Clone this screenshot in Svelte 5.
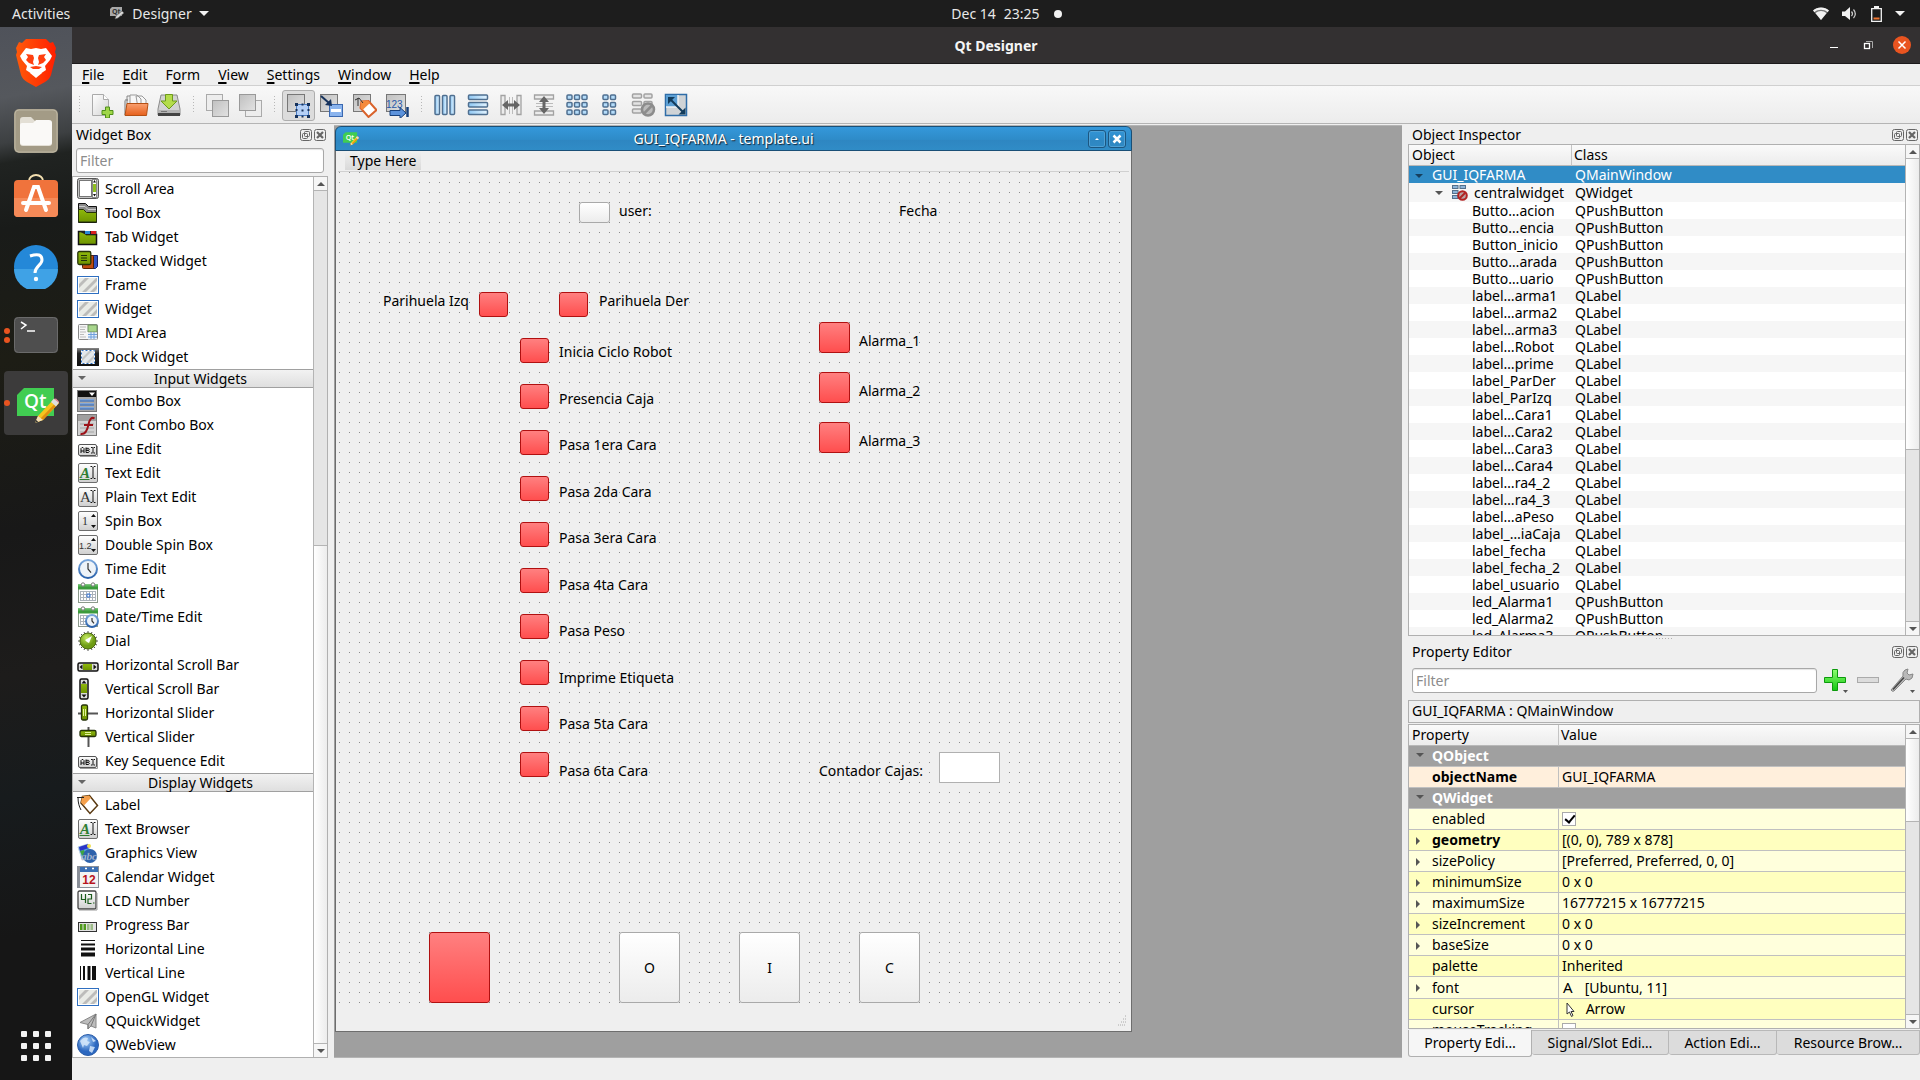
<script>
  const frame = (extra) => `<rect x="1.5" y="1.5" width="19" height="19" rx="1.5" fill="url(#g-light)" stroke="#6d6d6d"/>${extra}`;
  const stripes = `<rect x=".5" y="2.5" width="21" height="17" fill="#fff" stroke="#2f6fc0"/><rect x="2" y="4" width="18" height="14" fill="#e9ebe6"/><path d="M2 10l6-6h4L2 14zM5 18L19 4h1v3L9 18zM13 18l7-7v4l-3 3z" fill="#bcbcba"/>`;
  const abi = `<rect x="1.5" y="6.5" width="18" height="11" rx="1.5" fill="url(#g-light)" stroke="#555"/><path d="M3 18.500h17.500V8" stroke="#999" fill="none"/><path d="M4 15v-4.500L5 9.500h1l1 1V15M4 13h3M9 9.500v5h2.500l.8-1-.8-1.200H9h2.500l.8-1-.8-1H9M14 9.500h1.500l.5.5v4.500l-.5.500H14M18 9.500h-1.500M18 15h-1.500" fill="none" stroke="#111"/>`;
  const clockFace = (cx, cy, r) => `<circle cx="${cx}" cy="${cy}" r="${r}" fill="#eef3f8" stroke="url(#g-clock)" stroke-width="2"/><path d="M${cx} ${cy - r + 3}V${cy}l${r / 3} ${r / 2.500}" fill="none" stroke="#333" stroke-width="1.200"/>`;
  const calendar = `<rect x="1.500" y="3.500" width="19" height="17" fill="#fff" stroke="#8d9a8d"/><path d="M1 2.500h20v5H1z" fill="#3c9a3c"/><path d="M1 2.500h20v2H1z" fill="#5cb85c"/><circle cx="6" cy="2.500" r="1.700" fill="#fff" stroke="#777"/><circle cx="16" cy="2.500" r="1.700" fill="#fff" stroke="#777"/><path d="M3.500 9.500h15M3.500 12.500h15M3.500 15.500h15M3.500 18.500h15M3.500 9v10M6.500 9v10M9.500 9v10M12.500 9v10M15.500 9v10M18.500 9v10" stroke="#aab2ba"/>`;
  const textIcon = (color, line) => frame(`<text x="3" y="16" font-family="Liberation Serif" font-size="15" font-style="${line ? 'italic' : 'normal'}" font-weight="${line ? 'bold' : 'normal'}" fill="${color}">A</text>${line ? '<path d="M2.500 17.500h10" stroke="#2e7d32"/>' : ''}<path d="M13.500 4.500h1.500l1 1 1-1h1.500M16 5.500v10M13.500 16.500h1.500l1-1 1 1h1.500" fill="none" stroke="#111"/>`);

  const icons = {
    scrollArea: `<rect x=".5" y=".5" width="21" height="20" rx="2" fill="#c4c4c4" stroke="#555"/><rect x="2.500" y="2.500" width="12" height="16" fill="#fff" stroke="#777"/><rect x="15.500" y="1.500" width="4" height="18" fill="#fff" stroke="#888"/><path d="M16 6h3v8h-3z" fill="#8fbf1f"/><path d="M16 4.500h3L17.500 2zM16 16h3l-1.500 2.500z" fill="#111"/>`,
    toolBox: `<path d="M1.500 1.500h7l3 3h8v16h-18z" fill="#8a8a8a" stroke="#111"/><path d="M2 4.500h6l3 3h8" stroke="#ccc" fill="none"/><path d="M1.500 7.500h5l3 3h10v9.500h-18z" fill="url(#g-green)" stroke="#26330a"/>`,
    tabWidget: `<path d="M1.500 5.500h6l2 3h10v10h-18z" fill="url(#g-green)" stroke="#111" stroke-width="1.500"/><path d="M1.500 5h18v4h-10z" fill="#222"/><path d="M8 5h5v3H8z" fill="#2c8cd8"/><path d="M14 5h5v3h-5z" fill="#d82020"/>`,
    stacked: `<path d="M9.500 5.500h11v11l-2 2h-9z" fill="#3355c4" stroke="#15246b"/><rect x="5.500" y="5.500" width="11" height="13" rx="1" fill="#c04c10" stroke="#5a2000"/><rect x=".8" y="1.500" width="13" height="13" rx="1.500" fill="url(#g-green)" stroke="#26330a" stroke-width="1.300"/><path d="M4 5.500h6M4 8h6M4 10.500h6" stroke="#20300a"/>`,
    stripes,
    mdi: `<rect x="1.500" y="2.500" width="19" height="15" rx="1" fill="#f6f6f6" stroke="#888"/><path d="M3 5h6M3 7.500h5M3 10h6M3 12.500h4M3 15h6" stroke="#bbb"/><path d="M11 3h9v7h-9z" fill="#a8d68c" stroke="#6d8e5c"/><path d="M11 10.500h9v7h-9z" fill="#e6f0fb"/><path d="M11 12.500h9M11 15h9M14 10v7M17 10v7" stroke="#6f9fdc"/>`,
    dock: `<path d="M0 2h22v18H0z" fill="url(#g-dark)"/><path d="M4 4h14v14H4z" fill="#e3e7ea"/><path d="M5 12l7-7h3L5 15zM9 17l8-8v3l-5 5z" fill="#c4c6c4"/><path d="M4.500 4.500h13v13h-13z" fill="none" stroke="#fff"/><path d="M4.500 4.500h13v13h-13z" fill="none" stroke="#2c6fc0" stroke-dasharray="2 2"/>`,
    combo: `<rect x=".5" y=".5" width="19" height="21" fill="#a8a8a8" stroke="#777"/><path d="M1 1h18v6H1z" fill="#111"/><path d="M12 2.500h6L15 6z" fill="#fff"/><path d="M3 9h14v2.500H3zM3 13h14v2.500H3zM3 17h14v2.500H3z" fill="#7ea6dc"/><path d="M3 11h14M3 15h14M3 19h14" stroke="#3b67a8"/>`,
    fontCombo: `<rect x=".5" y=".5" width="19" height="21" fill="#d2d2d2" stroke="#777"/><path d="M1 1h18v6H1z" fill="#a0a0a0"/><path d="M3 10h14M3 14h14M3 18h14" stroke="#bbb" stroke-width="2"/><path d="M17.500 4.500c-3-2-5 1-6 6s-2.500 10.500-8 9.500M7 11h9" fill="none" stroke="#9c1218" stroke-width="2"/>`,
    abi,
    textEdit: textIcon('#2e7d32', true),
    plainText: textIcon('#333', false),
    spin: frame(`<text x="5" y="15" font-family="Liberation Serif" font-size="12" fill="#333">1</text><path d="M14 7h5l-2.500-3zM14 15h5l-2.500 3z" fill="#111"/>`),
    dspin: frame(`<text x="2" y="15" font-family="Liberation Sans" font-size="9" fill="#333">1.2</text><path d="M14 7h5l-2.500-3zM14 15h5l-2.500 3z" fill="#111"/>`),
    clock: clockFace(11, 11, 9),
    calendar: calendar + `<path d="M10 12h3v3h-3z" fill="none" stroke="#3a78d8"/>`,
    dateTime: calendar + clockFace(15, 15, 6),
    dial: `<path d="M11 1v20M1 11h20M4 4l14 14M18 4L4 18M7 2l8 18M15 2L7 20M2 7l18 8M2 15l18-8" stroke="#555"/><circle cx="11" cy="11" r="8" fill="url(#g-dial)" stroke="#4c6a10"/><path d="M8 10l7-4-3 7-2-1z" fill="#fff"/>`,
    hscroll: `<rect x="1" y="9" width="20" height="8" rx="1.500" fill="#ddd" stroke="#111" stroke-width="1.500"/><path d="M6 10h9v6H6z" fill="url(#g-green)"/><path d="M5.500 10.500v5L2.500 13zM16.500 10.500v5l3-2.500z" fill="#111"/>`,
    vscroll: `<rect x="3" y="1" width="8" height="20" rx="1.500" fill="#ddd" stroke="#111" stroke-width="1.500"/><path d="M4 6h6v9H4z" fill="url(#g-green)"/><path d="M4.500 5.500h5L7 2.500zM4.500 16.500h5l-2.500 3z" fill="#111"/>`,
    hslider: `<path d="M1 11.500h20" stroke="#555" stroke-width="2"/><rect x="4.500" y="3" width="6" height="15" rx="1.500" fill="url(#g-green)" stroke="#26330a" stroke-width="1.300"/><path d="M6.500 7v7M8.500 7v7" stroke="#e4f59a"/>`,
    vslider: `<path d="M11.500 1v20" stroke="#555" stroke-width="2"/><rect x="3" y="4.500" width="16" height="6" rx="1.500" fill="url(#g-green)" stroke="#26330a" stroke-width="1.300"/><path d="M8 6.500h6M8 8.500h6" stroke="#e4f59a"/>`,
    label: `<path d="M5.500 2.500l7-1 8 10-7.500 8L4 9z" fill="#fff" stroke="#5a3a12" stroke-width="1.500"/><path d="M5 2.500l7-1 2 2.500-7 7.500-3-3z" fill="#f5a04c"/><path d="M0 3.500h7M1 3c0 6 1 9 3 13" fill="none" stroke="#222"/>`,
    graphics: `<path d="M1 5l10-3 3 12-9 3z" fill="#5aa3e8" stroke="#b9cfe0"/><path d="M2 5l9-3 1 4-9 3z" fill="#2a35c8"/><path d="M3 9l4-1 2 5-3 3z" fill="#3fa540"/><circle cx="12" cy="4" r="2" fill="#f0e050"/><circle cx="13" cy="14" r="7" fill="#2d62ac"/><text x="4" y="18" font-family="Liberation Serif" font-size="11" font-style="italic" fill="#e6eefa" stroke="#6c86ac" stroke-width=".3">abc</text>`,
    calWidget: `<path d="M0 0h22v22H0z" fill="#8a8f98"/><path d="M3 1h18v20H3z" fill="#f3f3f3"/><path d="M3 1h18v5H3z" fill="#3b6fb4"/><path d="M8 2.500h2M15 2.500h2" stroke="#fff" stroke-width="1.500"/><text x="12" y="18" text-anchor="middle" font-family="Liberation Sans" font-size="12" font-weight="bold" fill="#b8141c">12</text>`,
    lcd: `<rect x="1" y="1" width="18" height="18" rx="1.500" fill="url(#g-light)" stroke="#444" stroke-width="1.300"/><path d="M2 20h18V3" stroke="#999" fill="none"/><path d="M4.500 4v5.500h4M8.500 4v9M11 4.500h3.500v4.500H11v4.500h3.500M16 13h1.500" fill="none" stroke="#1d5c1d" stroke-width="1.200"/>`,
    progress: `<rect x="1.500" y="8.500" width="18" height="9" fill="#e2e2e2" stroke="#333"/><path d="M3 10h2.500v6H3zM6.500 10H9v6H6.500z" fill="#4f9a1c"/><path d="M10 10h2.500v6H10zM13.500 10H16v6h-2.500z" fill="#9dbb88"/>`,
    hline: `<path d="M4 2.500h14" stroke="#111"/><path d="M4 6.500h14" stroke="#111" stroke-width="2"/><path d="M4 11h14" stroke="#111" stroke-width="3"/><path d="M4 16.500h14" stroke="#111" stroke-width="4"/>`,
    vline: `<path d="M3.500 4v14" stroke="#111"/><path d="M7 4v14" stroke="#111" stroke-width="2"/><path d="M12 4v14" stroke="#111" stroke-width="3"/><path d="M17 4v14" stroke="#111" stroke-width="4"/>`,
    quick: `<path d="M3 12.500L19 4v14l-5-2-3 3v-4.500z" fill="#bdbdbd" stroke="#888"/><path d="M19 4l-8 10.500V19M19 4l-5 12" fill="none" stroke="#777"/>`,
    web: `<circle cx="11" cy="11" r="10.500" fill="url(#g-globe)" stroke="#2a5ca8"/><path d="M3 7c3-4 6-4 8-3l-1 3 3 1-3 4-3-1-1 3zM13 12l5 1-3 6-3-2zM14 3l5 4-3 1z" fill="#d6e8fa" opacity=".85"/>`,
    newFile: `<path d="M1.500 1.500h11l5 5v16h-16z" fill="url(#g-page)" stroke="#aaa"/><path d="M12.500 1.500v5h5" fill="#fff" stroke="#aaa"/><path d="M14.500 14h4v3.500H22v4h-3.500V25h-4v-3.500H11v-4h3.500z" fill="#9fd648" stroke="#4f8f1a"/>`,
    open: `<path d="M3 3h8l1 3h9v16H3z" fill="#efefef" stroke="#888"/><path d="M6 2h7l4 4v10H6zM12 3h6l4 4v8h-8z" fill="#f7f7f7" stroke="#999"/><path d="M1 7.500V22M1 7h3" stroke="#777" fill="none"/><path d="M3 10.500h21l-1.500 12H1z" fill="url(#g-orange)" stroke="#b55014"/>`,
    save: `<path d="M4 2h16l3 14v6H1v-6z" fill="#d2d2d2" stroke="#8a8a8a"/><path d="M1.500 17h21v3h-21z" fill="#b4b4b4"/><path d="M1 20h22v3H1z" fill="#444"/><path d="M4 18.500h6" stroke="#777"/><path d="M8.500 1.500h7V8H20l-8 8-8-8h4.500z" fill="#b4dc4a" stroke="#6d9a1c"/>`,
    raise: `<rect x="1.500" y="1.500" width="16" height="16" fill="#ededed" stroke="#aaa"/><rect x="7.500" y="7.500" width="16" height="16" fill="url(#g-gray)" stroke="#999"/>`,
    lower: `<rect x="7.500" y="7.500" width="16" height="16" fill="#ededed" stroke="#aaa"/><rect x="1.500" y="1.500" width="16" height="16" fill="url(#g-gray)" stroke="#999"/>`,
    editWidgets: `<rect x="1.500" y="1.500" width="17" height="17" fill="url(#g-gray)" stroke="#777"/><rect x="10.500" y="11.500" width="12" height="11" fill="#b5d0f7" stroke="#4a7cc4"/><path d="M9 10h3v3H9zM21 10h3v3h-3zM9 22h3v3H9zM21 22h3v3h-3z" fill="#16325c"/><path d="M15.500 10.500h2v2h-2zM9.500 16h2v2h-2zM21.500 16h2v2h-2zM15.500 22.500h2v2h-2zM15.500 16.500h2v2h-2z" fill="#16325c"/>`,
    editSignals: `<rect x="1.500" y="1.500" width="17" height="17" fill="url(#g-gray)" stroke="#777"/><rect x="10.500" y="11.500" width="13" height="12" fill="#8ab4ee" stroke="#3a68b0"/><path d="M12 16h10v3H12z" fill="#fff"/><path d="M2 3l8 7" stroke="#16325c" stroke-width="2"/><path d="M13 13l-7-1 6-6z" fill="#16325c"/>`,
    editBuddies: `<rect x="1.500" y="1.500" width="17" height="17" fill="url(#g-gray)" stroke="#777"/><path d="M9.500 8.500l7-.500 8 9-8 7-8-9z" fill="#fff" stroke="#d9622b" stroke-width="2"/><path d="M9 8l7-.500 2 2.500-7.500 7-2-2z" fill="#f58a3c"/><path d="M3 7l4-2 4 5M6 5v8" fill="none" stroke="#333"/>`,
    editTab: `<rect x="1.500" y="1.500" width="19" height="17" fill="url(#g-gray)" stroke="#777"/><text x="1" y="15" font-family="Liberation Sans" font-size="10" fill="#2a58a8">123</text><path d="M5 17.500h10v-3l6 5.500-6 5.500v-3H5z" fill="#5b92dc" stroke="#17407c"/><path d="M22.500 14v10" stroke="#17407c" stroke-width="2.500"/>`,
    layoutH: `<g fill="url(#g-blue)" stroke="#4f6f90" stroke-width="1.500"><rect x="2" y="2.500" width="4.500" height="19" rx="1"/><rect x="9.500" y="2.500" width="4.500" height="19" rx="1"/><rect x="17" y="2.500" width="4.500" height="19" rx="1"/></g>`,
    layoutV: `<g fill="url(#g-blue)" stroke="#4f6f90" stroke-width="1.500"><rect x="2.500" y="2" width="19" height="4.500" rx="1"/><rect x="2.500" y="9.500" width="19" height="4.500" rx="1"/><rect x="2.500" y="17" width="19" height="4.500" rx="1"/></g>`,
    splitH: `<g fill="#ececec" stroke="#a2a2a2" stroke-width="1.300"><path d="M2 2.500h4v19H2zM18 2.500h4v19h-4z"/></g><path d="M10.500 4v17M13.500 4v17" stroke="#bbb"/><path d="M3 12l6-5v3.500h6V7l6 5-6 5v-3.500H9V17z" fill="#666"/>`,
    splitV: `<g fill="#ececec" stroke="#a2a2a2" stroke-width="1.300"><path d="M2.500 2h19v4h-19zM2.500 18h19v4h-19z"/></g><path d="M4 10.500h17M4 13.500h17" stroke="#bbb"/><path d="M12 3l5 6h-3.500v6H17l-5 6-5-6h3.500V9H7z" fill="#666"/>`,
    grid: `<g fill="#b4dcfa" stroke="#4f6f90" stroke-width="1.500">${[2, 9.5, 17].map((y) => [2, 9.5, 17].map((x) => `<rect x="${x}" y="${y}" width="5" height="4.500" rx="1"/>`).join('')).join('')}</g>`,
    form: `<g fill="#b4dcfa" stroke="#4f6f90" stroke-width="1.500">${[2, 9.5, 17].map((y) => [5, 12.5].map((x) => `<rect x="${x}" y="${y}" width="5" height="4.500" rx="1"/>`).join('')).join('')}</g>`,
    breakLayout: `<g fill="#e3e3e3" stroke="#a2a2a2" stroke-width="1.500"><rect x="1.500" y="1" width="9" height="4" rx="1"/><rect x="13" y="1" width="8" height="4" rx="1"/><rect x="1.500" y="8.500" width="9" height="4" rx="1"/><rect x="13" y="8.500" width="8" height="4" rx="1"/><rect x="1.500" y="16" width="9" height="4" rx="1"/></g><circle cx="17" cy="16.500" r="6" fill="#bbb" stroke="#8c8c8c" stroke-width="2.500"/><path d="M13 20.500l8-8" stroke="#8c8c8c" stroke-width="2.500"/>`,
    adjust: `<rect x="1.500" y="1.500" width="21" height="21" fill="#cfd3d6" stroke="#2f6da8" stroke-width="1.500"/><path d="M2 2h12v12H2z" fill="#5b9fd4"/><path d="M14 2v12H2" fill="none" stroke="#eef2f5" stroke-width="1.500"/><path d="M6 6l13 13" stroke="#123c5c" stroke-width="2"/><path d="M4 4h7l-7 7zM21.500 21.500h-7l7-7z" fill="#123c5c"/>`
  };

  const containers = [
    ['scrollArea', 'Scroll Area'], ['toolBox', 'Tool Box'], ['tabWidget', 'Tab Widget'], ['stacked', 'Stacked Widget'],
    ['stripes', 'Frame'], ['stripes', 'Widget'], ['mdi', 'MDI Area'], ['dock', 'Dock Widget']
  ];
  const inputs = [
    ['combo', 'Combo Box'], ['fontCombo', 'Font Combo Box'], ['abi', 'Line Edit'], ['textEdit', 'Text Edit'],
    ['plainText', 'Plain Text Edit'], ['spin', 'Spin Box'], ['dspin', 'Double Spin Box'], ['clock', 'Time Edit'],
    ['calendar', 'Date Edit'], ['dateTime', 'Date/Time Edit'], ['dial', 'Dial'], ['hscroll', 'Horizontal Scroll Bar'],
    ['vscroll', 'Vertical Scroll Bar'], ['hslider', 'Horizontal Slider'], ['vslider', 'Vertical Slider'], ['abi', 'Key Sequence Edit']
  ];
  const displays = [
    ['label', 'Label'], ['textEdit', 'Text Browser'], ['graphics', 'Graphics View'], ['calWidget', 'Calendar Widget'],
    ['lcd', 'LCD Number'], ['progress', 'Progress Bar'], ['hline', 'Horizontal Line'], ['vline', 'Vertical Line'],
    ['stripes', 'OpenGL Widget'], ['quick', 'QQuickWidget'], ['web', 'QWebView']
  ];

  const menus = [['', 'F', 'ile'], ['', 'E', 'dit'], ['F', 'o', 'rm'], ['', 'V', 'iew'], ['', 'S', 'ettings'], ['', 'W', 'indow'], ['', 'H', 'elp']];
  const toolGroups = [
    [['newFile', 'New'], ['open', 'Open'], ['save', 'Save']],
    [['raise', 'Bring to Front'], ['lower', 'Send to Back']],
    [['editWidgets', 'Edit Widgets'], ['editSignals', 'Edit Signals/Slots'], ['editBuddies', 'Edit Buddies'], ['editTab', 'Edit Tab Order']],
    [['layoutH', 'Lay Out Horizontally'], ['layoutV', 'Lay Out Vertically'], ['splitH', 'Horizontal Splitter'], ['splitV', 'Vertical Splitter'],
      ['grid', 'Lay Out in a Grid'], ['form', 'Lay Out in a Form'], ['breakLayout', 'Break Layout'], ['adjust', 'Adjust Size']]
  ];

  // Form widgets, in coordinates of the edited main window's central widget.
  const steps = ['Inicia Ciclo Robot', 'Presencia Caja', 'Pasa 1era Cara', 'Pasa 2da Cara', 'Pasa 3era Cara', 'Pasa 4ta Cara', 'Pasa Peso', 'Imprime Etiqueta', 'Pasa 5ta Cara', 'Pasa 6ta Cara'];
  const leds = [
    { x: 140, y: 120, w: 29, h: 25, name: 'led_ParIzq' },
    { x: 220, y: 120, w: 29, h: 25, name: 'led_ParDer' },
    ...steps.map((s, i) => ({ x: 181, y: 166 + i * 46, w: 29, h: 25, name: 'led ' + s })),
    ...[1, 2, 3].map((n, i) => ({ x: 480, y: 150 + i * 50, w: 31, h: 31, name: 'led_Alarma' + n })),
    { x: 90, y: 760, w: 61, h: 71, name: 'Button_parada' }
  ];
  const labels = [
    { x: 280, y: 29, text: 'user:' },
    { x: 560, y: 29, text: 'Fecha' },
    { x: 44, y: 119, text: 'Parihuela Izq' },
    { x: 260, y: 119, text: 'Parihuela Der' },
    ...steps.map((text, i) => ({ x: 220, y: 170 + Math.round(i * 46.5), text })),
    ...[1, 2, 3].map((n, i) => ({ x: 520, y: 159 + i * 50, text: 'Alarma_' + n }))
  ];
  const pushButtons = [
    { x: 240, y: 30, w: 31, h: 21, text: '', name: 'Button_usuario' },
    { x: 280, y: 760, w: 61, h: 71, text: 'O' },
    { x: 400, y: 760, w: 61, h: 71, text: 'I' },
    { x: 520, y: 760, w: 61, h: 71, text: 'C' }
  ];

  const objects = [
    ['Butto…acion', 'QPushButton'], ['Butto…encia', 'QPushButton'], ['Button_inicio', 'QPushButton'], ['Butto…arada', 'QPushButton'], ['Butto…uario', 'QPushButton'],
    ...['label…arma1', 'label…arma2', 'label…arma3', 'label…Robot', 'label…prime', 'label_ParDer', 'label_ParIzq', 'label…Cara1', 'label…Cara2', 'label…Cara3', 'label…Cara4',
      'label…ra4_2', 'label…ra4_3', 'label…aPeso', 'label_…iaCaja', 'label_fecha', 'label_fecha_2', 'label_usuario'].map((n) => [n, 'QLabel']),
    ['led_Alarma1', 'QPushButton'], ['led_Alarma2', 'QPushButton'], ['led_Alarma3', 'QPushButton']
  ];

  const props = [
    { group: 'QObject' },
    { name: 'objectName', value: 'GUI_IQFARMA', bold: true, tone: 'peach' },
    { group: 'QWidget' },
    { name: 'enabled', check: true, checked: true },
    { name: 'geometry', value: '[(0, 0), 789 x 878]', bold: true, tone: 'deep', arrow: true },
    { name: 'sizePolicy', value: '[Preferred, Preferred, 0, 0]', arrow: true },
    { name: 'minimumSize', value: '0 x 0', tone: 'deep', arrow: true },
    { name: 'maximumSize', value: '16777215 x 16777215', arrow: true },
    { name: 'sizeIncrement', value: '0 x 0', tone: 'deep', arrow: true },
    { name: 'baseSize', value: '0 x 0', arrow: true },
    { name: 'palette', value: 'Inherited', tone: 'deep' },
    { name: 'font', value: '[Ubuntu, 11]', arrow: true, glyph: 'font' },
    { name: 'cursor', value: 'Arrow', tone: 'deep', glyph: 'cursor' },
    { name: 'mouseTracking', check: true, checked: false }
  ];
  const tabs = ['Property Edi…', 'Signal/Slot Edi…', 'Action Edi…', 'Resource Brow…'];
</script>

{#snippet qtLogo()}
  <svg class="qt" viewBox="0 0 42 36" aria-hidden="true">
    <path d="M7 0h30v28H0V7z" fill="#41cd52" />
    <text x="7" y="20" font-family="Open Sans" font-weight="600" font-size="19" fill="#fff">Qt</text>
    <path d="M18 35l3-7L37 11l5 4-16 17z" fill="#f7c51e" />
    <path d="M23.500 30.500L40 13.500l2 1.500-16 17z" fill="#e08f10" />
    <path d="M34 14l3-3.500 5 4-3 4z" fill="#dedede" />
    <path d="M37 11l2-.500 3 3v1.500z" fill="#e58f96" />
    <path d="M18 35l3-7 5 4z" fill="#f3dfb8" />
    <path d="M18 35l1.200-3 2 1.800z" fill="#333" />
  </svg>
{/snippet}

{#snippet dockTitle(text)}
  <div class="dock-title">
    <h2>{text}</h2>
    <button class="mini" aria-label="Float {text}">
      <svg viewBox="0 0 12 12"><rect x=".5" y=".5" width="11" height="11" rx="2" /><rect x="4.500" y="2.500" width="5" height="5" rx="1" /><rect x="2.500" y="4.500" width="5" height="5" rx="1" /></svg>
    </button>
    <button class="mini" aria-label="Close {text}">
      <svg viewBox="0 0 12 12"><rect x=".5" y=".5" width="11" height="11" rx="2" /><path d="M3 3l6 6M9 3l-6 6" stroke-width="2.200" /></svg>
    </button>
  </div>
{/snippet}

{#snippet scrollbar(kind)}
  <div class="scrollbar {kind}">
    <button aria-label="Scroll up"><svg viewBox="0 0 8 4"><path d="M0 4l4-4 4 4z" /></svg></button>
    <div class="track"><div class="thumb"></div></div>
    <button aria-label="Scroll down"><svg viewBox="0 0 8 4"><path d="M0 0l4 4 4-4z" /></svg></button>
  </div>
{/snippet}

{#snippet widgetList(items)}
  <ul>
    {#each items as [icon, text]}
      <li><svg viewBox="0 0 22 22" aria-hidden="true">{@html icons[icon]}</svg>{text}</li>
    {/each}
  </ul>
{/snippet}

<svg class="defs" aria-hidden="true">
  <defs>
    <linearGradient id="g-light" x2="0" y2="1"><stop stop-color="#fff" /><stop offset="1" stop-color="#cfcfcf" /></linearGradient>
    <linearGradient id="g-page" x2="1" y2="1"><stop stop-color="#fff" /><stop offset="1" stop-color="#d4d4d4" /></linearGradient>
    <linearGradient id="g-gray" x2="1" y2="1"><stop stop-color="#c0c0c0" /><stop offset="1" stop-color="#e2e2e2" /></linearGradient>
    <linearGradient id="g-dark" x2="0" y2="1"><stop stop-color="#888" /><stop offset=".3" stop-color="#222" /><stop offset="1" stop-color="#111" /></linearGradient>
    <linearGradient id="g-green" x2="0" y2="1"><stop stop-color="#8fb80c" /><stop offset="1" stop-color="#6e9400" /></linearGradient>
    <linearGradient id="g-orange" x2="0" y2="1"><stop stop-color="#f9a070" /><stop offset="1" stop-color="#e6601c" /></linearGradient>
    <linearGradient id="g-blue" x2="1" y2="0"><stop stop-color="#8fc8f4" /><stop offset="1" stop-color="#e4f4ff" /></linearGradient>
    <linearGradient id="g-clock" x2="0" y2="1"><stop stop-color="#7aa7dc" /><stop offset="1" stop-color="#2b62ab" /></linearGradient>
    <linearGradient id="g-brave" x2="1" y2="0"><stop stop-color="#ff5a0a" /><stop offset="1" stop-color="#ff1f00" /></linearGradient>
    <linearGradient id="g-plus" x2="0" y2="1"><stop stop-color="#8dff70" /><stop offset="1" stop-color="#12c512" /></linearGradient>
    <radialGradient id="g-dial" cx=".4" cy=".3"><stop stop-color="#c5ea62" /><stop offset="1" stop-color="#6e9c14" /></radialGradient>
    <radialGradient id="g-globe" cx=".4" cy=".3"><stop stop-color="#a9d2fa" /><stop offset="1" stop-color="#2c68c0" /></radialGradient>
  </defs>
</svg>

<div class="desktop">
  <header class="topbar">
    <div class="left">
      <button class="activities">Activities</button>
      <button class="appmenu">
        <svg width="15" height="13" viewBox="0 0 15 13" aria-hidden="true"><path d="M2 0h10v9H0V2z" fill="#a8a8a8" /><text x="2" y="7" font-family="Open Sans" font-size="7" font-weight="700" fill="#333">Qt</text><path d="M5 12l1-3 6-5 2 2-6 5z" fill="#d6d6d6" stroke="#555" stroke-width=".6" /></svg>
        Designer
        <svg width="10" height="5" viewBox="0 0 10 5" aria-hidden="true"><path d="M0 0h10L5 5z" fill="#f2f2f2" /></svg>
      </button>
    </div>
    <button class="clock"><span>Dec 14</span><span>23:25</span><i></i></button>
    <button class="tray" aria-label="System menu">
      <svg width="16" height="14" viewBox="0 0 16 14"><path d="M0 3.500C4-.5 12-.5 16 3.500L8 13z" fill="#777" /><path d="M0 3.500C4-.5 12-.5 16 3.500l-1.500 1.700C11 2 5 2 1.500 5.200z" fill="#f2f2f2" /><path d="M2.500 6.200c3-3 8-3 11 0L8 13z" fill="#f2f2f2" /></svg>
      <svg width="16" height="14" viewBox="0 0 16 14"><path d="M0 4.500h3L8 0v13L3 9H0z" fill="#f2f2f2" /><path d="M9.500 4.500q2 2.300 0 4.600M11.500 2.500q3.600 4.300 0 8.600" fill="none" stroke="#ccc" stroke-width="1.200" /></svg>
      <svg width="11" height="16" viewBox="0 0 11 16"><path d="M.7 2.700h9.600v12.600H.7z" fill="none" stroke="#f2f2f2" stroke-width="1.300" /><path d="M3 0h5v2H3z" fill="#f2f2f2" /><path d="M2.500 11.500h6v2h-6z" fill="#f0742f" /></svg>
      <svg width="10" height="5" viewBox="0 0 10 5"><path d="M0 0h10L5 5z" fill="#f2f2f2" /></svg>
    </button>
  </header>

  <nav class="launcher" aria-label="Dock">
    <button class="app brave" aria-label="Brave">
      <svg viewBox="0 0 40 48"><path d="M10 0h20l4 4 3-1 3 6-1 4 1 3-5 20c-1 3-3 5-6 7l-9 5-9-5c-3-2-5-4-6-7L0 16l1-3-1-4 3-6 3 1z" fill="url(#g-brave)" /><path d="M10 9l5 1 5-1 5 1 5-1 6 8-2 4-5 6 1 4-6 4-4-2-4 2-6-4 1-4-5-6-2-4z" fill="#fff" /><path d="M20 31l6 3-6 5-6-5z" fill="#fff" /><path d="M10 15l7 1 1 3-1 4 1 3-5-2-3-3 2-3zM30 15l-7 1-1 3 1 4-1 3 5-2 3-3-2-3zM14 28l6-1 6 1-3 2h-6z" fill="#ff4010" /></svg>
    </button>
    <button class="app files" aria-label="Files">
      <svg viewBox="0 0 44 44"><rect width="44" height="44" rx="5" fill="#a39b86" /><rect x="1" y="1" width="42" height="42" rx="4" fill="none" stroke="#bcb5a2" /><path d="M6 11q0-3 3-3h8l4 4h14q3 0 3 3v19q0 3-3 3H9q-3 0-3-3z" fill="#e3dfd5" /><path d="M6 16q0-2 2-2h11l3-3h13q3 0 3 3v19q0 3-3 3H9q-3 0-3-3z" fill="#faf9f7" /></svg>
    </button>
    <button class="app software" aria-label="Ubuntu Software">
      <svg viewBox="0 0 44 44"><path d="M15 8v-1a7 6 0 0 1 14 0v1" fill="none" stroke="#f3dfb0" stroke-width="2" /><rect y="6" width="44" height="37" rx="4" fill="#f0733c" /><path d="M0 24h44v15q0 4-4 4H4q-4 0-4-4z" fill="#f58a58" /><path d="M12 36l8-23h4l8 23M9 29h26" fill="none" stroke="#fff" stroke-width="4" stroke-linecap="round" /></svg>
    </button>
    <button class="app help" aria-label="Help">
      <svg viewBox="0 0 44 44"><circle cx="22" cy="22" r="22" fill="#2488d8" /><path d="M0 24a22 22 0 0 0 44 0z" fill="#3fa2e6" /><path d="M16 11q12-4 12 4c0 5-7 6-7 13" fill="none" stroke="#fff" stroke-width="3" /><circle cx="22" cy="34" r="2.200" fill="#fff" /></svg>
    </button>
    <button class="app terminal" aria-label="Terminal">
      <i class="run"></i><i class="run"></i>
      <svg viewBox="0 0 44 36"><rect width="44" height="36" rx="4" fill="#4e4e4e" /><rect x=".5" y=".5" width="43" height="35" rx="4" fill="none" stroke="#6b6b6b" /><path d="M7 5l5 3-5 4" fill="none" stroke="#fff" stroke-width="1.500" /><path d="M13 14h8" stroke="#fff" stroke-width="1.500" /></svg>
    </button>
    <button class="app designer" aria-label="Qt Designer">
      <i class="run"></i>
      {@render qtLogo()}
    </button>
    <button class="app grid-button" aria-label="Show Applications">
      <svg viewBox="0 0 30 30">
        {#each [0, 12, 24] as y}{#each [0, 12, 24] as x}<rect {x} {y} width="6" height="6" rx="1" fill="#f2f2f2" />{/each}{/each}
      </svg>
    </button>
  </nav>

  <main class="window">
    <header class="titlebar">
      <span></span>
      <h1>Qt Designer</h1>
      <div class="controls">
        <button aria-label="Minimize"><svg width="18" height="18" viewBox="0 0 18 18"><path d="M5 11.500h8" stroke="#fff" /></svg></button>
        <button aria-label="Restore"><svg width="18" height="18" viewBox="0 0 18 18"><path d="M7 5.500h6.500V12" fill="none" stroke="#aaa" /><rect x="5.500" y="7.500" width="5" height="5" fill="none" stroke="#fff" stroke-width="1.300" /></svg></button>
        <button aria-label="Close"><svg width="18" height="18" viewBox="0 0 18 18"><circle cx="9" cy="9" r="9" fill="#e95420" /><path d="M5.500 5.500l7 7M12.500 5.500l-7 7" stroke="#fff" stroke-width="1.500" /></svg></button>
      </div>
    </header>

    <nav class="menubar" aria-label="Main menu">
      {#each menus as [pre, key, post]}<button>{pre}<u>{key}</u>{post}</button>{/each}
    </nav>

    <div class="toolbar" role="toolbar" aria-label="Tools">
      {#each toolGroups as group}
        <span class="handle"></span>
        {#each group as [icon, title]}
          <button class:pressed={icon === 'editWidgets'} aria-label={title}><svg viewBox="0 0 25 25">{@html icons[icon]}</svg></button>
        {/each}
      {/each}
    </div>

    <div class="workspace">
      <section class="widgetbox">
        {@render dockTitle('Widget Box')}
        <div class="filter-row"><input type="text" placeholder="Filter" aria-label="Filter widgets" /></div>
        <div class="panel">
          <div class="scrolled">
            {@render widgetList(containers)}
            <h3><span></span>Input Widgets</h3>
            {@render widgetList(inputs)}
            <h3><span></span>Display Widgets</h3>
            {@render widgetList(displays)}
          </div>
          {@render scrollbar('at-end')}
        </div>
      </section>

      <section class="mdi" aria-label="Forms">
        <div class="formwin">
          <header>
            {@render qtLogo()}
            <h2>GUI_IQFARMA - template.ui</h2>
            <button aria-label="Shade form"><svg viewBox="0 0 18 18"><path d="M7 10h4L9 8z" fill="#fff" /></svg></button>
            <button aria-label="Close form"><svg viewBox="0 0 18 18"><path d="M5.500 5.500l7 7M12.500 5.500l-7 7" stroke="#fff" stroke-width="2.500" /></svg></button>
          </header>
          <div class="formmenu"><button>Type Here</button></div>
          <div class="canvas">
            {#each leds as l}
              <button class="led" style="left:{l.x}px;top:{l.y}px;width:{l.w}px;height:{l.h}px" aria-label={l.name}></button>
            {/each}
            {#each pushButtons as b}
              <button class="push" style="left:{b.x}px;top:{b.y}px;width:{b.w}px;height:{b.h}px" aria-label={b.text || b.name}>{b.text}</button>
            {/each}
            {#each labels as l}
              <span class="text" style="left:{l.x}px;top:{l.y}px">{l.text}</span>
            {/each}
            <label class="text counter-label" for="counter">Contador Cajas:</label>
            <input class="counter" id="counter" type="text" />
          </div>
          <footer><svg width="9" height="11" viewBox="0 0 9 11" aria-hidden="true"><path d="M8 1h1M6 4h3M4 7h5M1 10h8" stroke="#aaa" stroke-dasharray="1 1" /></svg></footer>
        </div>
      </section>

      <aside class="right">
        <section class="inspector">
          {@render dockTitle('Object Inspector')}
          <div class="panel">
            <div class="scrolled">
              <table class="tree">
                <colgroup><col class="c1" /><col /></colgroup>
                <thead><tr><th>Object</th><th>Class</th></tr></thead>
                <tbody>
                  <tr class="selected"><td><span class="arrow down"></span>GUI_IQFARMA</td><td>QMainWindow</td></tr>
                  <tr class="central">
                    <td>
                      <span class="arrow down"></span>
                      <svg width="16" height="16" viewBox="0 0 16 16" aria-hidden="true"><g fill="#8db4d8" stroke="#54708c"><rect x=".5" y=".5" width="5.500" height="3" /><rect x="8" y=".5" width="5.500" height="3" /><rect x=".5" y="5.500" width="5.500" height="3" /><rect x=".5" y="10.500" width="5.500" height="3" /></g><circle cx="10.500" cy="10.500" r="4.300" fill="#b9a3a3" stroke="#b22222" stroke-width="2" /><path d="M7.500 13.500l6-6" stroke="#b22222" stroke-width="2" /></svg>
                      centralwidget
                    </td>
                    <td>QWidget</td>
                  </tr>
                  {#each objects as [name, cls]}<tr class="leaf"><td>{name}</td><td>{cls}</td></tr>{/each}
                </tbody>
              </table>
            </div>
            {@render scrollbar('tall')}
          </div>
        </section>

        <div class="splitter"></div>

        <section class="editor">
          {@render dockTitle('Property Editor')}
          <div class="filter-row">
            <input type="text" placeholder="Filter" aria-label="Filter properties" />
            <button aria-label="Add dynamic property"><svg viewBox="0 0 27 27"><path d="M9.500 2.500h5v8h8v5h-8v8h-5v-8h-8v-5h8z" fill="url(#g-plus)" stroke="#0c9a0c" /><path d="M20 23h5l-2.500 3z" fill="#555" /></svg></button>
            <button aria-label="Remove dynamic property"><svg viewBox="0 0 27 27"><rect x="1.500" y="10.500" width="21" height="5" fill="#dcdcdc" stroke="#aaa" /></svg></button>
            <button aria-label="Configure"><svg viewBox="0 0 27 27"><path d="M2 23L14 9q-1-4 2-6l3-1-1 4 2 2 4-1q0 5-4 6l-3-1L5 24q-2 1-3-1z" fill="#b9b9b9" stroke="#888" /><path d="M4 22.500L15 10.500" stroke="#444" stroke-width="1.500" /><path d="M21 23h5l-2.500 3z" fill="#555" /></svg></button>
          </div>
          <div class="path">GUI_IQFARMA : QMainWindow</div>
          <div class="panel">
            <div class="scrolled">
              <table class="props">
                <colgroup><col class="c1" /><col /></colgroup>
                <thead><tr><th>Property</th><th>Value</th></tr></thead>
                <tbody>
                  {#each props as p}
                    {#if p.group}
                      <tr class="group"><td colspan="2"><span class="arrow down"></span>{p.group}</td></tr>
                    {:else}
                      <tr class={p.tone ?? 'pale'} class:bold={p.bold}>
                        <td>{#if p.arrow}<span class="arrow side"></span>{/if}{p.name}</td>
                        <td>
                          {#if p.check}
                            <input type="checkbox" checked={p.checked} aria-label={p.name} />
                          {:else}
                            {#if p.glyph === 'font'}<span class="fontglyph">A</span>{/if}
                            {#if p.glyph === 'cursor'}<svg class="cursor" width="16" height="16" viewBox="0 0 16 16" aria-hidden="true"><path d="M5 1v11l2.500-2 2 4.500 1.500-1-2-4H12z" fill="#fff" stroke="#333" /></svg>{/if}
                            {p.value}
                          {/if}
                        </td>
                      </tr>
                    {/if}
                  {/each}
                </tbody>
              </table>
            </div>
            {@render scrollbar('short')}
          </div>
          <div class="tabs" role="tablist">
            {#each tabs as t, i}<button role="tab" aria-selected={i === 0}>{t}</button>{/each}
          </div>
        </section>
      </aside>
    </div>
  </main>
</div>

<style>
  :global(body) { background: #161616; }
  * { box-sizing: border-box; }
  button, input { font: inherit; color: inherit; margin: 0; padding: 0; border: 0; background: none; }
  button { display: flex; align-items: center; justify-content: center; white-space: nowrap; }
  h1, h2, h3, ul { margin: 0; padding: 0; font: inherit; list-style: none; }
  svg { display: block; flex: none; }
  table { border-collapse: separate; border-spacing: 0; width: 100%; table-layout: fixed; }
  th, td { padding: 0; text-align: left; font-weight: 400; white-space: nowrap; overflow: hidden; }
  .defs { position: absolute; width: 0; height: 0; }

  .desktop {
    display: grid;
    grid-template: 27px minmax(0, 1fr) / 72px minmax(0, 1fr);
    height: 100vh;
    font: 14px/20px "Noto Sans", "Open Sans", sans-serif;
    color: #000;
  }

  .topbar {
    grid-column: 1 / -1;
    display: grid;
    grid-template-columns: 1fr auto 1fr;
    align-items: center;
    background: #1d1d1d;
    color: #e8e8e8;
    padding: 0 15px 0 12px;
  }
  .topbar .left { display: flex; gap: 40px; }
  .appmenu { gap: 7px; }
  .clock { gap: 8px; padding-left: 96px; }
  .clock i { width: 8px; height: 8px; border-radius: 50%; background: #f2f2f2; margin-left: 6px; }
  .tray { justify-self: end; gap: 13px; }

  .launcher {
    display: flex;
    flex-direction: column;
    align-items: center;
    background: linear-gradient(170deg, #4f525a 0, #55585d 70px, #3d4042 115px, #202321 135px, #191b19 200px, #1d1d15 330px, #181818 500px, #1d1c1b 640px, #171b1d 760px, #161616 900px);
  }
  .app { position: relative; width: 64px; flex: none; }
  .brave { margin-top: 12px; }
  .brave svg { width: 40px; height: 48px; }
  .files { margin-top: 22px; }
  .files svg, .software svg, .help svg { width: 44px; height: 44px; }
  .software { margin-top: 21px; }
  .help { margin-top: 27px; }
  .terminal { margin-top: 28px; }
  .terminal svg { width: 44px; height: 36px; }
  .designer { margin-top: 18px; height: 64px; padding: 6px 0 0 4px; border-radius: 4px; background: #3c3b3b; }
  .designer :global(.qt) { width: 42px; height: 36px; }
  .grid-button { margin-top: auto; margin-bottom: 19px; }
  .grid-button svg { width: 30px; height: 30px; }
  .run { position: absolute; left: 0; top: 29px; width: 6px; height: 6px; border-radius: 50%; background: #e95420; }
  .terminal .run { top: 11px; }
  .terminal .run + .run { top: 20px; }

  .window { display: flex; flex-direction: column; min-height: 0; background: #efefef; }
  .titlebar {
    display: grid;
    grid-template-columns: 1fr auto 1fr;
    align-items: center;
    height: 37px;
    padding: 0 9px;
    background: #333031;
    border-bottom: 1px solid #1c1a1b;
    color: #f5f5f5;
  }
  .titlebar h1 { font-weight: 700; padding-top: 1px; }
  .controls { display: flex; justify-content: flex-end; gap: 16px; }
  .menubar { display: flex; gap: 2px; height: 22px; padding-left: 2px; border-bottom: 1px solid #d0d0d0; }
  .menubar button { padding: 0 8px; }
  .menubar u { text-underline-offset: 2px; text-decoration-thickness: 2px; }
  .toolbar {
    display: flex;
    align-items: center;
    height: 38px;
    padding-top: 1px;
    border-bottom: 1px solid #b4b4b4;
    background: linear-gradient(#f8f8f8, #ececec);
  }
  .toolbar button { width: 33px; height: 31px; border: 1px solid transparent; border-radius: 3px; }
  .toolbar button.pressed { background: #dcdcdc; border-color: #adadad; }
  .toolbar svg { width: 25px; height: 25px; }
  .handle {
    width: 15px;
    height: 18px;
    padding: 0 5px;
    background: conic-gradient(from 270deg at 1px 1px, #b8b8b8 25%, transparent 0) 5px 0 / 3px 3px content-box;
  }

  .workspace { display: grid; grid-template-columns: 256px minmax(0, 1fr) 512px; column-gap: 6px; flex: 1; min-height: 0; padding-bottom: 22px; }
  .widgetbox, .right, .inspector, .editor { display: flex; flex-direction: column; min-height: 0; }
  .inspector { flex: 1; }

  .dock-title { display: flex; align-items: center; gap: 2px; height: 20px; padding: 1px 2px 0 4px; }
  .dock-title h2 { flex: 1; }
  .mini svg { width: 12px; height: 12px; fill: none; stroke: #666; }
  .filter-row { display: flex; align-items: center; gap: 6px; padding: 4px 4px 3px; }
  .filter-row input {
    flex: 1;
    min-width: 0;
    height: 25px;
    padding: 0 3px;
    border: 1px solid #a8a8a8;
    border-radius: 3px;
    background: #fff;
    box-shadow: inset 0 1px 1px #e4e4e4;
  }
  .filter-row input::placeholder { color: #8c8c8c; opacity: 1; }

  .panel { display: flex; min-height: 0; flex: 1; border: 1px solid #b0b0b0; background: #fff; }
  .scrolled { flex: 1; min-width: 0; min-height: 0; overflow: hidden; }
  .widgetbox li { display: flex; align-items: center; gap: 6px; height: 24px; padding-left: 4px; white-space: nowrap; }
  .widgetbox li svg { width: 22px; height: 22px; }
  .widgetbox h3 {
    position: relative;
    height: 19px;
    margin-bottom: 1px;
    border: solid #a0a0a0;
    border-width: 1px 0;
    background: linear-gradient(#f2f2f2, #dfdfdf);
    line-height: 17px;
    text-align: center;
    padding-left: 15px;
  }
  .widgetbox h3 span { position: absolute; left: 5px; top: 6px; border: 4px solid transparent; border-top-color: #666; border-bottom: 0; }

  .scrollbar { display: flex; flex-direction: column; width: 14px; border-left: 1px solid #b4b4b4; background: #e5e5e5; }
  .scrollbar button { height: 14px; flex: none; background: #f6f6f6; border-bottom: 1px solid #b4b4b4; }
  .scrollbar button:last-child { border-top: 1px solid #b4b4b4; border-bottom: 0; }
  .scrollbar svg { width: 8px; height: 4px; fill: #555; }
  .track { display: flex; flex-direction: column; flex: 1; }
  .thumb { background: linear-gradient(90deg, #fff, #ececec); border-bottom: 1px solid #b4b4b4; }
  .at-end .track { justify-content: flex-end; }
  .at-end .thumb { height: 58.4%; border-top: 1px solid #b4b4b4; border-bottom: 0; }
  .tall .thumb { height: 63%; }
  .short .thumb { height: 30%; }

  .mdi { position: relative; margin-top: 1px; overflow: hidden; background: #9f9f9f; border: solid #b4b4b4; border-width: 1px 0; }
  .formwin {
    position: absolute;
    left: 1px;
    top: 0;
    width: 797px;
    display: flex;
    flex-direction: column;
    background: #efefef;
    border: solid #6d6d6d;
    border-width: 0 1px 1px;
    border-radius: 6px 6px 0 0;
    padding: 0 2px 1px;
  }
  .formwin header {
    display: flex;
    align-items: center;
    gap: 2px;
    height: 25px;
    margin: 0 -3px;
    padding: 0 5px 0 7px;
    border: 1px solid #1a4f76;
    border-radius: 6px 6px 0 0;
    background: linear-gradient(#3498db, #2e8bc8 55%, #2e86c1 56%, #308cc6);
    color: #fff;
  }
  .formwin header :global(.qt) { width: 16px; height: 14px; }
  .formwin header h2 { flex: 1; text-align: center; text-shadow: 1px 1px 1px #123; }
  .formwin header button { width: 18px; height: 18px; border: 1px solid #1c5680; border-radius: 3px; box-shadow: inset 0 0 0 1px #4fa0d4; }
  .formwin header button svg { width: 18px; height: 18px; }
  .formmenu { display: flex; align-items: center; height: 21px; padding: 0 7px; border-bottom: 1px solid #d0d0d0; }
  .formmenu button { height: 18px; padding: 0 5px; background: linear-gradient(#efefef, #d9d9d9); }
  .canvas {
    position: relative;
    height: 832px;
    padding-right: 8px;
    background: conic-gradient(from 270deg at 1px 1px, #8c8c8c 25%, transparent 0) 1px 0 / 10px 10px;
    background-clip: content-box;
  }
  .canvas > * { position: absolute; }
  .led { margin-left: 1px; border: 1px solid #b01010; border-radius: 3px; background: linear-gradient(#ff8080, #ff4e4e); }
  .push { margin-left: 1px; border: 1px solid #a9a9a9; border-radius: 3px; background: linear-gradient(#fff, #ececec); }
  .text { margin-left: 1px; white-space: nowrap; }
  .counter-label { left: 480px; top: 589px; }
  .counter { left: 601px; top: 580px; width: 61px; height: 31px; border: 1px solid #b0b0b0; background: #fff; }
  .formwin footer { display: flex; justify-content: flex-end; align-items: flex-end; height: 26px; padding: 0 3px 4px; }

  .scrolled th {
    height: 21px;
    padding-left: 3px;
    border-bottom: 1px solid #b8b8b8;
    border-right: 1px solid #c4c4c4;
    background: linear-gradient(#fafafa, #ececec);
  }
  .scrolled th:last-child { border-right: 0; padding-left: 2px; }
  .arrow { display: inline-block; width: 8px; vertical-align: middle; }
  .arrow::before { content: ""; display: block; width: 0; border: 4px solid transparent; }
  .arrow.down::before { border-top-color: #555; border-bottom: 0; }
  .arrow.side::before { border-left-color: #555; border-right: 0; }

  .tree .c1 { width: 163px; }
  .tree td { height: 17px; line-height: 17px; padding-left: 3px; }
  .tree tr:nth-child(even) td { background: #f6f6f6; }
  .tree .selected td { background: #308cc6; color: #fff; }
  .tree .selected td:first-child { padding-left: 6px; }
  .tree .selected .arrow { margin-right: 9px; }
  .tree .selected .arrow::before { border-top-color: #16405e; }
  .tree .central td { height: 19px; }
  .tree .central td:first-child { display: flex; align-items: center; gap: 6px; padding-left: 26px; }
  .tree .central .arrow { margin-right: 3px; }
  .tree .leaf td:first-child { padding-left: 63px; }

  .splitter { align-self: center; width: 17px; height: 5px; background: linear-gradient(90deg, #b0b0b0 1px, transparent 1px) 0 2px / 3px 1px repeat-x; }

  .editor { height: 417px; flex: none; }
  .editor .filter-row { padding: 6px 4px 6px; }
  .editor .filter-row button { width: 27px; height: 27px; }
  .editor .filter-row svg { width: 27px; height: 27px; }
  .path { height: 23px; padding-left: 3px; border: 1px solid #b0b0b0; }
  .editor .panel { flex: 1; margin-top: 1px; }
  .props .c1 { width: 150px; }
  .props td { height: 21px; line-height: 20px; border-bottom: 1px solid #c0c0c0; }
  .props td:first-child { position: relative; padding-left: 23px; border-right: 1px solid #c0c0c0; }
  .props td:last-child { padding-left: 3px; }
  .props .arrow { position: absolute; left: 7px; top: 7px; }
  .props .group td { background: #a0a0a0; color: #fff; font-weight: 700; border-right: 0; padding-left: 23px; }
  .peach td { background: #ffefdc; }
  .pale td { background: #ffffdc; }
  .deep td { background: #ffffbf; }
  .props .bold td:first-child { font-weight: 700; }
  .props input { appearance: none; display: block; width: 14px; height: 14px; border: 1px solid #aaa; background: #fff; }
  .props input:checked::before { content: ""; display: block; width: 4px; height: 8px; margin: 0 0 0 4px; border: solid #000; border-width: 0 2px 2px 0; transform: rotate(40deg); }
  .fontglyph { display: inline-block; width: 18px; margin-right: 1px; font-size: 15px; padding-left: 1px; }
  .cursor { display: inline-block; vertical-align: middle; margin-right: 4px; }

  .tabs { display: grid; grid-template-columns: 124px 137px 108px minmax(0, 1fr); height: 29px; padding-top: 1px; align-items: start; }
  .tabs button { height: 25px; border: 1px solid #b8b8b8; border-left: 0; background: #dcdcdc; border-radius: 0 0 3px 3px; }
  .tabs button[aria-selected="true"] { height: 27px; background: #f6f6f6; border: 1px solid #b0b0b0; border-top: 0; }
</style>
